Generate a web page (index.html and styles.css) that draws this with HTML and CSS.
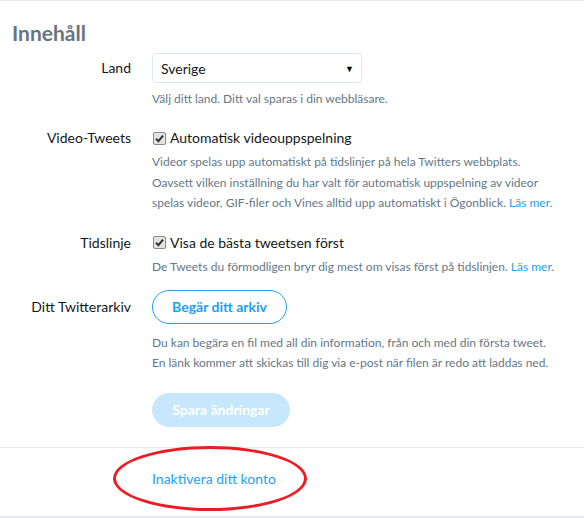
FILE: index.html
```html
<!DOCTYPE html>
<html lang="sv">
<head>
<meta charset="utf-8">
<title>Innehåll</title>
<link rel="stylesheet" href="styles.css">
</head>
<body>
<div class="page">
  <section class="settings">
    <h2 class="title">Innehåll</h2>

    <div class="row row-country">
      <div class="label">Land</div>
      <div class="control">
        <div class="select"><span>Sverige</span><span class="arrow">▼</span></div>
        <p class="help">Välj ditt land. Ditt val sparas i din webbläsare.</p>
      </div>
    </div>

    <div class="row">
      <div class="label label-line">Video-Tweets</div>
      <div class="control">
        <div class="check-line"><span class="check"><svg viewBox="0 0 13 13" width="13" height="13"><path d="M3 6.6 L5.4 9.2 L10 3.6" fill="none" stroke="#333" stroke-width="2"/></svg></span>Automatisk videouppspelning</div>
        <p class="help help-multi">Videor spelas upp automatiskt på tidslinjer på hela Twitters webbplats.<br>Oavsett vilken inställning du har valt för automatisk uppspelning av videor<br>spelas videor, GIF-filer och Vines alltid upp automatiskt i Ögonblick. <a href="#" class="link">Läs mer</a>.</p>
      </div>
    </div>

    <div class="row">
      <div class="label label-line">Tidslinje</div>
      <div class="control">
        <div class="check-line"><span class="check"><svg viewBox="0 0 13 13" width="13" height="13"><path d="M3 6.6 L5.4 9.2 L10 3.6" fill="none" stroke="#333" stroke-width="2"/></svg></span>Visa de bästa tweetsen först</div>
        <p class="help">De Tweets du förmodligen bryr dig mest om visas först på tidslinjen. <a href="#" class="link">Läs mer</a>.</p>
      </div>
    </div>

    <div class="row row-archive">
      <div class="label label-button">Ditt Twitterarkiv</div>
      <div class="control">
        <button class="btn btn-outline">Begär ditt arkiv</button>
        <p class="help help-archive">Du kan begära en fil med all din information, från och med din första tweet.<br>En länk kommer att skickas till dig via e-post när filen är redo att laddas ned.</p>
      </div>
    </div>

    <div class="row row-submit">
      <div class="label"></div>
      <div class="control">
        <button class="btn btn-primary" disabled>Spara ändringar</button>
      </div>
    </div>
  </section>

  <div class="footer">
    <a href="#" class="deactivate">Inaktivera ditt konto</a>
    <span class="mark"></span>
  </div>
</div>
</body>
</html>
```
FILE: styles.css
```css
html, body {
  margin: 0;
  padding: 0;
}
body {
  background: #e6ecf0;
  font-family: "Lato", "Open Sans", sans-serif;
  color: #14171a;
  width: 584px;
  height: 518px;
  overflow: hidden;
}
.page {
  background: #fff;
  border-top: 1px solid #e6ecf0;
}
.settings {
  border-bottom: 1px solid #e6ecf0;
  padding: 0 0 20px 0;
}
.title {
  margin: 0;
  padding: 20px 0 0 12px;
  font-size: 21px;
  line-height: 24px;
  font-weight: 700;
  color: #66757f;
}
.row {
  display: grid;
  grid-template-columns: 131px 1fr;
  column-gap: 21px;
  margin-top: 19px;
}
.row-country { margin-top: 8px; }
.row-archive { margin-top: 13px; }
.label {
  text-align: right;
  font-size: 14px;
  line-height: 30px;
}
.label-line { line-height: 20px; }
.label-button { line-height: 34px; }
.select {
  box-sizing: border-box;
  width: 210px;
  height: 30px;
  border: 1px solid #e1e8ed;
  border-radius: 4px;
  display: flex;
  align-items: center;
  justify-content: space-between;
  padding: 0 7px 0 8px;
  font-size: 14px;
}
.arrow {
  font-size: 9px;
  color: #000;
}
.help {
  margin: 4px 0 0 0;
  font-size: 12px;
  line-height: 20px;
  color: #657786;
}
.row-country .help { margin-top: 6px; }
.help-multi { line-height: 20.5px; }
.help-archive { margin-top: 9px; line-height: 20.5px; }
.link {
  color: #1da1f2;
  text-decoration: none;
}
.check-line {
  display: flex;
  align-items: center;
  gap: 4px;
  font-size: 14px;
  line-height: 20px;
}
.check {
  box-sizing: border-box;
  width: 13px;
  height: 13px;
  margin-left: 1px;
  border: 1px solid #8a8a8a;
  border-radius: 2px;
  background: #e3e3e3;
  display: flex;
}
.check svg {
  margin: -1px;
}
.btn {
  box-sizing: border-box;
  height: 34px;
  border-radius: 100px;
  font-family: inherit;
  font-size: 14px;
  font-weight: 700;
  padding: 0 16px;
  display: block;
}
.btn-outline {
  width: 135px;
  background: #fff;
  border: 1px solid #1da1f2;
  color: #1da1f2;
}
.btn-primary {
  width: 138px;
  background: #c7e8fc;
  border: 1px solid #c7e8fc;
  color: #fff;
}
.footer {
  position: relative;
  padding: 21px 0 27px 152px;
  font-size: 14px;
  line-height: 20px;
  background: #fff;
}
.deactivate {
  color: #1da1f2;
  text-decoration: none;
}
.mark {
  position: absolute;
  left: 113px;
  top: -2px;
  width: 194px;
  height: 65px;
  box-sizing: border-box;
  border: 3px solid #ed1c24;
  border-radius: 50%;
}
```
